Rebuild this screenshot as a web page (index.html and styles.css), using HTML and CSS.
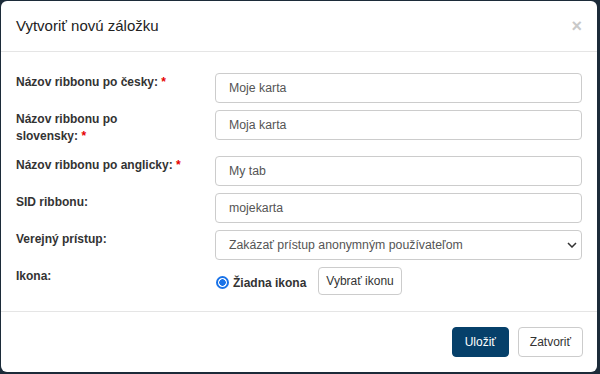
FILE: index.html
```html
<!DOCTYPE html>
<html lang="sk">
<head>
  <meta charset="UTF-8">
  <title>Vytvoriť novú záložku</title>
  <link rel="stylesheet" href="styles.css">
</head>
<body>

  <div class="modal">
    <div class="modal-header">
      <h4 class="modal-title">Vytvoriť novú záložku</h4>
      <button type="button" class="close">&times;</button>
    </div>

    <form class="modal-body">
      <div class="form-group">
        <label class="control-label" for="nameCs">Názov ribbonu po česky: <span class="req">*</span></label>
        <input type="text" id="nameCs" class="form-control" value="Moje karta">
      </div>

      <div class="form-group">
        <label class="control-label" for="nameSk">Názov ribbonu po<br>slovensky: <span class="req">*</span></label>
        <input type="text" id="nameSk" class="form-control" value="Moja karta">
      </div>

      <div class="form-group">
        <label class="control-label" for="nameEn">Názov ribbonu po anglicky: <span class="req">*</span></label>
        <input type="text" id="nameEn" class="form-control" value="My tab">
      </div>

      <div class="form-group">
        <label class="control-label" for="sid">SID ribbonu:</label>
        <input type="text" id="sid" class="form-control" value="mojekarta">
      </div>

      <div class="form-group">
        <label class="control-label" for="access">Verejný prístup:</label>
        <div class="select-wrap">
          <select id="access" class="form-control">
            <option>Zakázať prístup anonymným používateľom</option>
            <option>Povoliť prístup anonymným používateľom</option>
          </select>
          <svg class="chevron" width="10" height="6" viewBox="0 0 10 6"><path d="M1 1l4 4 4-4" fill="none" stroke="#333" stroke-width="1.5"/></svg>
        </div>
      </div>

      <div class="form-group">
        <label class="control-label">Ikona:</label>
        <div class="icon-row">
          <label class="radio"><input type="radio" name="icon" checked> Žiadna ikona</label>
          <button type="button" class="btn btn-small">Vybrať ikonu</button>
        </div>
      </div>
    </form>

    <div class="modal-footer">
      <button type="button" class="btn btn-primary">Uložiť</button>
      <button type="button" class="btn btn-default">Zatvoriť</button>
    </div>
  </div>

</body>
</html>
```

FILE: styles.css
```css
body {
  font-family: 'Liberation Sans', Arial, sans-serif;
  font-size: 12px;
  color: #333;
  background-color: #1c2b39;
  margin: 0;
  padding: 1px 3px 2px 1px;
}

.modal {
  background-color: white;
  border-radius: 6px;
  height: 371px;
  display: flex;
  flex-direction: column;
}

.modal-header {
  display: flex;
  justify-content: space-between;
  align-items: center;
  padding: 15px;
  border-bottom: 1px solid #e5e5e5;
}

.modal-title {
  margin: 0;
  font-size: 15px;
  font-weight: normal;
  line-height: 20px;
  color: #222;
}

.close {
  background: none;
  border: none;
  padding: 0;
  font-family: 'Liberation Sans', Arial, sans-serif;
  font-size: 18px;
  font-weight: bold;
  line-height: 20px;
  color: #c9c9c9;
  cursor: pointer;
}

.modal-body {
  flex: 1;
  padding: 21px 15px 0;
}

.form-group {
  display: grid;
  grid-template-columns: 169px 1fr;
  column-gap: 30px;
  margin-bottom: 7px;
}

.control-label {
  font-weight: bold;
  line-height: 17px;
  padding-top: 1px;
  margin-bottom: 4px;
}

.req {
  color: #e60000;
}

.form-control {
  box-sizing: border-box;
  width: 100%;
  height: 30px;
  padding: 0 13px;
  font-family: inherit;
  font-size: 12.3px;
  color: #555;
  background-color: white;
  border: 1px solid #ccc;
  border-radius: 4px;
}

.select-wrap {
  position: relative;
}

select.form-control {
  appearance: none;
}

.chevron {
  position: absolute;
  right: 5px;
  top: 12px;
}

.icon-row {
  display: flex;
  align-items: center;
  gap: 12px;
}

.radio {
  display: flex;
  align-items: center;
  gap: 4px;
  font-weight: bold;
  padding-top: 3px;
}

.radio input {
  appearance: none;
  box-sizing: border-box;
  width: 13px;
  height: 13px;
  margin: 0 0 0 1px;
  border: 2px solid #1a73e8;
  border-radius: 50%;
  background: radial-gradient(circle, #1a73e8 0 3px, white 3.5px);
}

.btn {
  font-family: inherit;
  font-size: 12px;
  height: 30px;
  padding: 0 11px;
  border-radius: 4px;
  border: 1px solid #ccc;
  background-color: white;
  color: #333;
  cursor: pointer;
}

.btn-small {
  height: 28px;
  padding: 0 7px;
}

.btn-primary {
  padding: 0 12px;
  background-color: #06406a;
  border-color: #06406a;
  color: white;
}

.modal-footer {
  display: flex;
  justify-content: flex-end;
  gap: 9px;
  padding: 15px 14px 15px;
  border-top: 1px solid #e5e5e5;
}
```
